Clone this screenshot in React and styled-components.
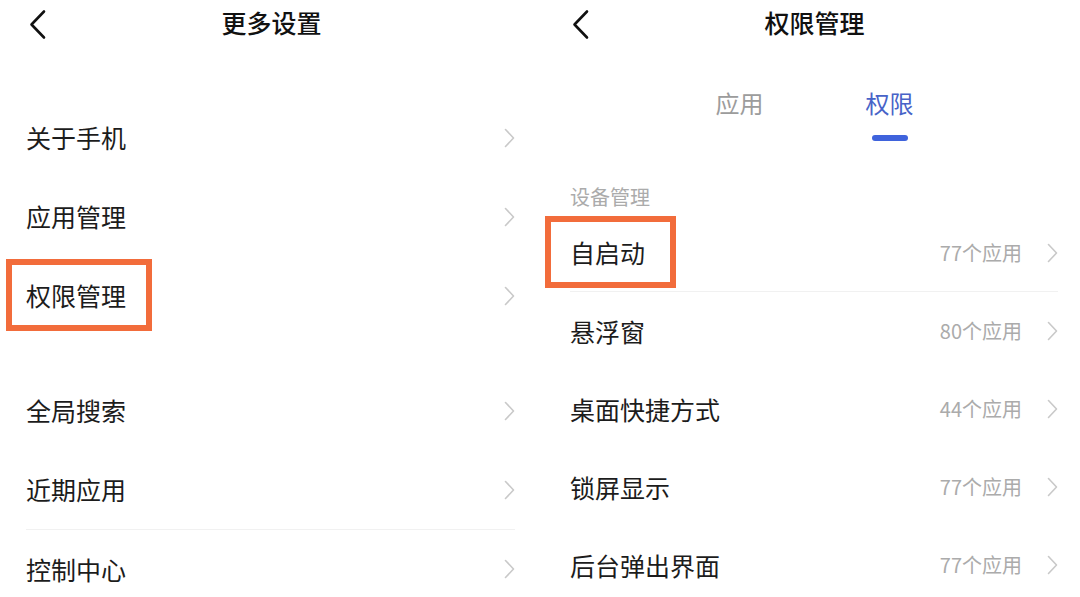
import React from 'react'
import styled, { createGlobalStyle } from 'styled-components'

const GlobalStyle = createGlobalStyle`
  html, body {
    margin: 0;
    padding: 0;
    background: #ffffff;
    overflow: hidden;
  }
  body {
    font-family: "Noto Sans CJK SC", "Noto Sans", sans-serif;
    color: #1c1c1c;
  }
`

const Page = styled.div`
  display: grid;
  grid-template-columns: 543px 543px;
  width: 1080px;
  height: 597px;
  overflow: hidden;
`

const Panel = styled.div`
  position: relative;
  display: flex;
  flex-direction: column;
  width: 543px;
  height: 597px;
  overflow: hidden;

  & > * {
    flex-shrink: 0;
  }
`

const Header = styled.div`
  display: grid;
  grid-template-columns: 1fr auto 1fr;
  align-items: center;
  height: 48px;
`

const BackButton = styled.div`
  display: flex;
  align-items: center;
  padding-left: 29px;
`

const Title = styled.div`
  padding-bottom: 4px;
  font-size: 25px;
  font-weight: 500;
  line-height: 1;
  color: #111;
`

const List = styled.div`
  display: flex;
  flex-direction: column;
  margin-top: ${(p) => p.$top || 0}px;
`

const Row = styled.div`
  display: flex;
  align-items: center;
  justify-content: space-between;
  flex-shrink: 0;
  height: ${(p) => p.$height}px;
  margin: 0 ${(p) => p.$right}px 0 ${(p) => p.$left}px;
  box-sizing: border-box;
  border-top: ${(p) => (p.$divider === 'top' ? '1px solid #f1f1f1' : 'none')};
  border-bottom: ${(p) => (p.$divider === 'bottom' ? '1px solid #f1f1f1' : 'none')};
`

const Label = styled.span`
  position: relative;
  font-size: 25px;
  line-height: 35px;
  color: #1c1c1c;
`

const Highlight = styled.span`
  position: absolute;
  top: -19px;
  bottom: -18px;
  left: ${(p) => -p.$l}px;
  right: ${(p) => -p.$r}px;
  border: 6px solid #f26c3b;
  pointer-events: none;
`

const Trail = styled.div`
  display: flex;
  align-items: center;
  gap: 25px;
`

const Count = styled.span`
  font-size: 20px;
  line-height: 1;
  color: #ababab;
`

const GroupGap = styled.div`
  height: 36px;
  flex-shrink: 0;
`

const Tabs = styled.div`
  display: flex;
  justify-content: center;
  gap: 102px;
  margin-top: 43px;
`

const Tab = styled.div`
  display: flex;
  flex-direction: column;
  align-items: center;
  gap: 20px;
  font-size: 24px;
  line-height: 24px;
  color: ${(p) => (p.$active ? '#4863c8' : '#9c9c9c')};
`

const Indicator = styled.div`
  width: 36px;
  height: 6px;
  border-radius: 3px;
  background: ${(p) => (p.$active ? '#3f63dc' : 'transparent')};
`

const SectionLabel = styled.div`
  padding: 46px 0 0 27px;
  margin-bottom: 7px;
  font-size: 20px;
  line-height: 20px;
  color: #ababab;
`

const BackIcon = () => (
  <svg width="18" height="31" viewBox="0 0 18 31" fill="none">
    <path d="M15 2.5 L2.5 15.5 L15 28.5" stroke="#111" strokeWidth="2.6" strokeLinecap="round" strokeLinejoin="round" />
  </svg>
)

const Chevron = () => (
  <svg width="11" height="20" viewBox="0 0 11 20" fill="none">
    <path d="M1.5 1.5 L9.5 10 L1.5 18.5" stroke="#c9c9c9" strokeWidth="1.6" strokeLinecap="round" strokeLinejoin="round" />
  </svg>
)

const PageHeader = ({ title }) => (
  <Header>
    <BackButton>
      <BackIcon />
    </BackButton>
    <Title>{title}</Title>
    <div />
  </Header>
)

const moreGroups = [
  [
    { label: '关于手机' },
    { label: '应用管理' },
    { label: '权限管理', mark: { l: 20, r: 26 } }
  ],
  [
    { label: '全局搜索' },
    { label: '近期应用' },
    { label: '控制中心', divider: 'top' }
  ]
]

const permissions = [
  { label: '自启动', count: 77, mark: { l: 25, r: 31 }, divider: 'bottom' },
  { label: '悬浮窗', count: 80 },
  { label: '桌面快捷方式', count: 44 },
  { label: '锁屏显示', count: 77 },
  { label: '后台弹出界面', count: 77 }
]

function MoreSettings() {
  return (
    <Panel>
      <PageHeader title="更多设置" />
      <List $top={50}>
        {moreGroups.map((group, gi) => (
          <React.Fragment key={gi}>
            {gi > 0 && <GroupGap />}
            {group.map((item) => (
              <Row key={item.label} $height={79} $left={26} $right={28} $divider={item.divider}>
                <Label>
                  {item.label}
                  {item.mark && <Highlight $l={item.mark.l} $r={item.mark.r} />}
                </Label>
                <Chevron />
              </Row>
            ))}
          </React.Fragment>
        ))}
      </List>
    </Panel>
  )
}

function PermissionManager() {
  return (
    <Panel>
      <PageHeader title="权限管理" />
      <Tabs>
        <Tab>
          应用
          <Indicator />
        </Tab>
        <Tab $active>
          权限
          <Indicator $active />
        </Tab>
      </Tabs>
      <SectionLabel>设备管理</SectionLabel>
      <List>
        {permissions.map((item) => (
          <Row key={item.label} $height={78} $left={27} $right={28} $divider={item.divider}>
            <Label>
              {item.label}
              {item.mark && <Highlight $l={item.mark.l} $r={item.mark.r} />}
            </Label>
            <Trail>
              <Count>{item.count}个应用</Count>
              <Chevron />
            </Trail>
          </Row>
        ))}
      </List>
    </Panel>
  )
}

export default function App() {
  return (
    <>
      <GlobalStyle />
      <Page>
        <MoreSettings />
        <PermissionManager />
      </Page>
    </>
  )
}
